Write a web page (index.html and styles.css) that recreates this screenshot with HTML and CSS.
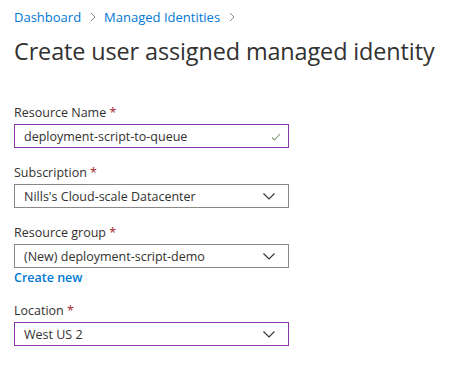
FILE: index.html
```html
<!DOCTYPE html>
<html>
<head>
<meta charset="utf-8">
<link rel="stylesheet" href="styles.css">
</head>
<body>
<div class="page">
  <nav class="crumbs">
    <a class="crumb">Dashboard</a>
    <svg class="sep" width="6" height="10" viewBox="0 0 6 10"><path d="M1 1 L5 5 L1 9" fill="none" stroke="#8a8886" stroke-width="1"/></svg>
    <a class="crumb">Managed Identities</a>
    <svg class="sep" width="6" height="10" viewBox="0 0 6 10"><path d="M1 1 L5 5 L1 9" fill="none" stroke="#8a8886" stroke-width="1"/></svg>
  </nav>
  <h1 class="title">Create user assigned managed identity</h1>

  <div class="form">
    <div class="field">
      <label class="label">Resource Name <span class="req">*</span></label>
      <div class="box box-focus">
        <span class="value">deployment-script-to-queue</span>
        <svg class="check" width="10" height="8" viewBox="0 0 10 8"><path d="M1 4.5 L3.5 7 L9 1" fill="none" stroke="#7a9a6c" stroke-width="1.1"/></svg>
      </div>
    </div>

    <div class="field">
      <label class="label">Subscription <span class="req">*</span></label>
      <div class="box">
        <span class="value">Nills's Cloud-scale Datacenter</span>
        <svg class="chev" width="12" height="7" viewBox="0 0 12 7"><path d="M0.5 0.5 L6 6 L11.5 0.5" fill="none" stroke="#323130" stroke-width="1.1"/></svg>
      </div>
    </div>

    <div class="field field-link">
      <label class="label">Resource group <span class="req">*</span></label>
      <div class="box">
        <span class="value">(New) deployment-script-demo</span>
        <svg class="chev" width="12" height="7" viewBox="0 0 12 7"><path d="M0.5 0.5 L6 6 L11.5 0.5" fill="none" stroke="#323130" stroke-width="1.1"/></svg>
      </div>
      <a class="create">Create new</a>
    </div>

    <div class="field">
      <label class="label">Location <span class="req">*</span></label>
      <div class="box box-focus">
        <span class="value">West US 2</span>
        <svg class="chev" width="12" height="7" viewBox="0 0 12 7"><path d="M0.5 0.5 L6 6 L11.5 0.5" fill="none" stroke="#323130" stroke-width="1.1"/></svg>
      </div>
    </div>
  </div>
</div>
</body>
</html>
```

FILE: styles.css
```css
html, body {
  margin: 0;
  padding: 0;
  background: #ffffff;
}
body {
  font-family: "Open Sans", "Noto Sans", sans-serif;
  color: #323130;
}
.page {
  padding: 8px 0 0 14px;
}
.crumbs {
  display: flex;
  align-items: center;
  height: 18px;
  font-size: 13px;
}
.crumb {
  color: #0078d4;
}
.sep {
  margin: 0 8px 0 9px;
}
.title {
  margin: 10px 0 0 0;
  font-size: 23.4px;
  font-weight: 400;
  line-height: 30px;
  color: #323130;
  letter-spacing: -0.1px;
}
.form {
  margin-top: 38px;
  width: 275px;
  display: flex;
  flex-direction: column;
  gap: 16px;
}
.field {
  display: flex;
  flex-direction: column;
}
.label {
  font-size: 12.5px;
  line-height: 17px;
  height: 17px;
  margin-bottom: 3px;
  font-weight: 400;
  color: #323130;
}
.req {
  color: #a4262c;
}
.box {
  box-sizing: border-box;
  height: 24px;
  border: 1px solid #8a8886;
  display: flex;
  align-items: center;
  padding: 0 12px 0 9px;
  font-size: 12.5px;
}
.box-focus {
  border-color: #8a36a8;
}
.value {
  flex: 1;
  white-space: nowrap;
  color: #323130;
}
.check {
  margin-right: -5px;
  margin-top: 1px;
}
.chev {
  margin-right: 1px;
}
.create {
  color: #0078d4;
  font-size: 12.5px;
  font-weight: 600;
  line-height: 17px;
  margin-top: 1px;
}
```
